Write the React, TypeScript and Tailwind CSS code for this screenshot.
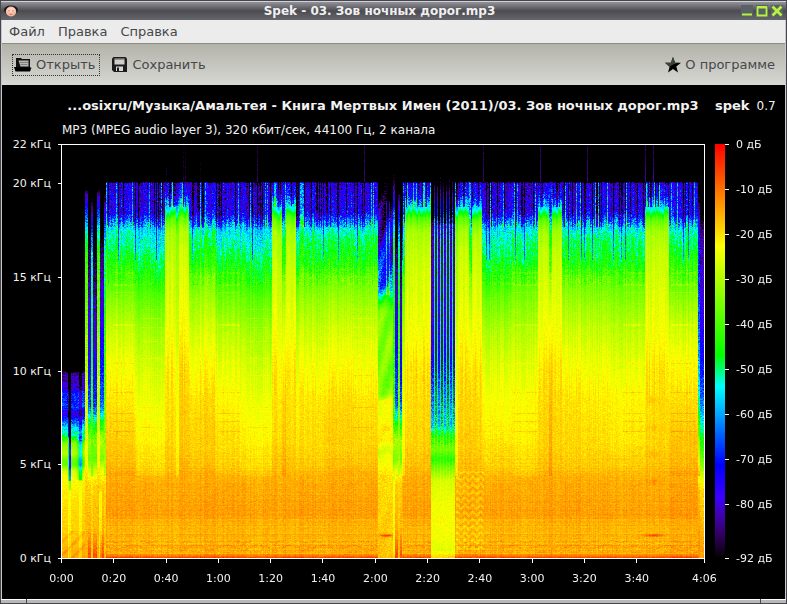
import { Fragment, useEffect, useRef } from "react";

/* ---------- spectrogram model ---------- */

const COLS = 642;
const ROWS = 413;

type Point = [number, number];

// Level curves: [row, dB]
const NORMAL: Point[] = [[0, -104], [36, -101], [38, -79], [66, -77], [74, -66], [84, -54], [95, -49], [118, -45], [132, -38], [155, -33], [185, -28], [215, -24.5], [255, -21], [300, -19.5], [318, -18], [340, -15], [370, -14], [385, -16], [408, -15.5], [410, -10], [412, -6]];
const QUIET: Point[] = [[0, -104], [36, -101], [38, -80], [68, -78], [76, -66], [84, -56], [100, -52], [112, -48], [130, -43], [155, -36], [185, -30], [215, -26], [250, -23], [290, -20.5], [318, -18.5], [340, -15], [370, -14], [385, -16], [408, -15.5], [410, -10], [412, -6]];
const LOUD: Point[] = [[0, -103], [36, -99], [38, -76], [50, -72], [58, -60], [66, -50], [74, -38], [86, -31], [110, -28], [150, -25.5], [190, -23], [225, -20], [300, -18.5], [340, -15], [370, -14], [385, -16], [408, -15.5], [410, -10], [412, -6]];
const INTRO: Point[] = [[0, -120], [222, -110], [228, -84], [243, -80], [248, -69], [262, -68], [268, -78], [274, -68], [281, -57], [290, -50], [298, -34], [308, -29], [314, -36], [319, -38], [325, -27], [335, -22], [360, -19.5], [390, -18], [412, -15]];
const TAIL: Point[] = [[0, -120], [50, -105], [90, -84], [190, -76], [250, -66], [285, -50], [320, -34], [335, -24], [345, -19], [412, -14]];
const BREAK: Point[] = [[0, -110], [40, -100], [80, -82], [115, -72], [140, -64], [150, -50], [165, -36], [195, -34], [235, -36], [248, -34], [256, -25], [295, -21], [307, -28], [315, -24], [330, -20], [412, -17]];
const GAP_DARK: Point[] = [[0, -120], [60, -110], [80, -84], [200, -76], [240, -66], [280, -58], [292, -44], [304, -36], [314, -44], [322, -37], [335, -27], [360, -24], [395, -24], [405, -26], [412, -18]];
const GAP_LIT: Point[] = [[0, -115], [40, -90], [70, -66], [95, -50], [200, -46], [280, -44], [300, -33], [314, -40], [322, -33], [335, -25], [380, -22], [405, -24], [412, -18]];
const LEAD_LIT: Point[] = [[0, -115], [36, -108], [50, -82], [85, -54], [110, -42], [200, -32], [260, -27], [320, -22], [340, -18], [412, -15]];
const LEAD_DARK: Point[] = [[0, -120], [36, -118], [110, -88], [200, -76], [260, -66], [275, -50], [295, -32], [314, -37], [325, -26], [340, -18.5], [385, -15.5], [412, -6]];

// Sections of the track: [last column, curve, offset in dB]
const SECTIONS: [number, Point[], number][] = [
  [6, INTRO, 0], [9, INTRO, -16], [17, INTRO, 0], [20, INTRO, -10], [23, INTRO, 2],
  [26, LEAD_LIT, 0], [29, LEAD_DARK, 0], [31, LEAD_LIT, -14], [35, LEAD_DARK, -2], [38, LEAD_LIT, 0], [42, LEAD_DARK, 2], [44, LEAD_LIT, -9],
  [74, QUIET, 2], [103, QUIET, -1], [114, LOUD, 0], [117, LOUD, -4], [127, LOUD, 1],
  [153, NORMAL, 1], [178, QUIET, 0], [210, QUIET, -1], [220, LOUD, 0], [224, NORMAL, 3], [234, LOUD, 0],
  [262, NORMAL, 0], [316, NORMAL, 1], [331, BREAK, 0], [333, GAP_LIT, 3], [336, LEAD_DARK, 2], [338, LEAD_LIT, -8], [340, LEAD_DARK, 0],
  [343, NORMAL, -3], [369, LOUD, 0], [393, GAP_DARK, 0],
  [396, LOUD, -4], [407, LOUD, 0], [410, NORMAL, 1], [420, LOUD, 0],
  [450, QUIET, 0], [476, NORMAL, -1], [487, LOUD, 0], [490, NORMAL, 4], [500, LOUD, 0],
  [583, NORMAL, 0], [607, LOUD, 0], [636, QUIET, 2], [638, TAIL, 12], [642, TAIL, 0],
];

function noise(a: number, b: number) {
  let h = Math.imul(a + 11, 374761393) ^ Math.imul(b + 7, 668265263);
  h = Math.imul(h ^ (h >>> 13), 1274126177);
  h ^= h >>> 16;
  return (h >>> 0) / 2147483648 - 1;
}

function curveAt(points: Point[], row: number) {
  for (let i = 1; i < points.length; i++) {
    if (row <= points[i][0]) {
      const [r0, d0] = points[i - 1];
      const [r1, d1] = points[i];
      return d0 + ((d1 - d0) * (row - r0)) / (r1 - r0);
    }
  }
  return points[points.length - 1][1];
}

const bump = (v: number, centre: number, width: number) => Math.exp(-(((v - centre) / width) ** 2));

function levelAt(x: number, y: number) {
  const section = SECTIONS.find((s) => x < s[0]) ?? SECTIONS[SECTIONS.length - 1];
  let curve = section[1];
  let offset = section[2];
  if (curve === GAP_DARK && (x - 370) % 3 === 2) curve = GAP_LIT;
  const full = curve === NORMAL || curve === QUIET || curve === LOUD;
  const n = noise(x >> 1, y) * 0.4 + noise(x, y) * 0.6;
  const col = noise(x, 9001);
  const col2 = noise(x >> 1, 5003);

  if (curve === INTRO) {
    if (x === 8 || x === 7) offset = y < 300 ? -50 : y < 345 ? -38 : -9;
    const edge = y > 290 && y < 335 ? bump(x, 18, 3) * -14 : 0;
    const swell = y > 385 ? bump((y + x) % 13, 6, 2) * 3 : 0;
    return curveAt(curve, y) + offset * (y > 335 ? 0.3 : 1) + edge + n * (y < 296 ? 7 : 2) + swell;
  }
  if (curve === BREAK) {
    const dx = x - 316;
    const wave = Math.sin(y / 9 + dx / 2.4) * (y > 150 ? 3 : 7);
    const spike = (dx === 8 || dx === 11) && y > 55 && y < 150 ? 16 : 0;
    const tone = y > 250 && y < 335 ? bump(y % 27, 13, 3) * bump(dx, 8, 5) * 4 : 0;
    const line = bump(y, 390, 1.3) * 13 * bump(dx, 8, 7);
    return curveAt(curve, y) + wave * (y < 255 ? 1 : 0.2) + spike + tone + line + n * (y < 150 ? 8 : 3);
  }

  let level = curveAt(curve, full && y > 40 && y < 130 ? y + col2 * 3 : y) + offset * (y > 330 ? 0.15 : 1);
  if (!full) {
    return level + n * (y < 300 ? 7 : 3) + (x > 36 && x < 40 && y > 345 ? -5 : 0);
  }

  // Band above 20 kHz is silent apart from single transients
  if (y < 37) {
    const transient = [195, 302, 421, 478, 525, 583, 591].includes(x) ? 15 : 0;
    const faint = [104, 121, 123, 138, 440, 507, 545].includes(x) ? 9 : 0;
    return level + transient + faint + n * 4;
  }

  const loud = curve === LOUD;
  const top = loud ? 62 : 82;
  if (y < top) {
    level += n * 11 + col * 7;
    if (col > 0.82) level += 11;
    if (col < -0.6) level -= 8;
  } else if (y < 140) {
    level += n * (loud ? 2 : 6) + col * (loud ? 1.5 : 4);
    if (col < -0.86 && y < 115 && !loud) level -= 10;
  } else {
    level += n * 2.4 + col * (y < 250 ? 2 : 1);
  }

  // Slow tonal drift between bars
  level += Math.sin(x / 19) * (y > 100 && y < 300 ? 0.8 : 0.2);

  // Held notes show as horizontal lines
  const held = (x > 50 && x < 72) || (x > 155 && x < 178) || (x > 350 && x < 380) || (x > 450 && x < 475) || (x > 560 && x < 583) || (x > 608 && x < 634);
  if (held && !loud && [127, 128, 139, 140, 147, 179, 180, 218, 247, 268, 276, 286].includes(y)) level += 3;
  const held2 = (x > 78 && x < 100) || (x > 184 && x < 207) || (x > 290 && x < 312);
  if (held2 && [164, 173, 182, 196, 213, 230, 262, 282].includes(y)) level += 2.5;
  if (y > 310) level += noise(3, y) * 0.6;
  if (y > 368) level += noise(4, y) * 1.1;
  if (y === 400) level += 3;
  if (y > 394 && y < 408) level += bump((y + Math.round(Math.sin(x / 5) * 2)) % 7, 3, 1) * 1.6 + n;

  // Trill after the second pause
  if (x >= 394 && x < 422 && y > 325 && y < 405) {
    level += Math.sin(y * 0.9 + Math.sin(x * 0.8) * 1.5) * 2 - 1.5;
  }
  // Low lead note near the end
  if (x > 578 && x < 605) {
    level += bump(y, 390, 1.3) * 9 * bump(x, 591, 9);
    if (y > 250 && y < 345) level += bump(y % 27, 12, 3) * bump(x, 591, 6) * 2;
  }
  return level;
}

function colourOf(db: number): [number, number, number] {
  const v = Math.min(1, Math.max(0, (db + 92) / 92)) * 0.6625;
  let r = 0;
  let g = 0;
  let b = 0;
  if (v < 0.15) {
    r = (0.15 - v) / 0.225;
    b = 1;
  } else if (v < 0.275) {
    g = (v - 0.15) / 0.125;
    b = 1;
  } else if (v < 0.325) {
    g = 1;
    b = (0.325 - v) / 0.05;
  } else if (v < 0.5) {
    r = (v - 0.325) / 0.175;
    g = 1;
  } else {
    r = 1;
    g = (0.6625 - v) / 0.1625;
  }
  const fade = v < 0.1 ? v / 0.1 : 1;
  return [r * 255 * fade, g * 255 * fade, b * 255 * fade];
}

function paint(canvas: HTMLCanvasElement, level: (x: number, y: number) => number) {
  const ctx = canvas.getContext("2d");
  if (!ctx) return;
  const image = ctx.createImageData(canvas.width, canvas.height);
  for (let y = 0; y < canvas.height; y++) {
    for (let x = 0; x < canvas.width; x++) {
      const [r, g, b] = colourOf(level(x, y));
      const i = (y * canvas.width + x) * 4;
      image.data[i] = r;
      image.data[i + 1] = g;
      image.data[i + 2] = b;
      image.data[i + 3] = 255;
    }
  }
  ctx.putImageData(image, 0, 0);
}

function Spectrogram() {
  const ref = useRef<HTMLCanvasElement>(null);
  useEffect(() => {
    if (ref.current) paint(ref.current, levelAt);
  }, []);
  return <canvas ref={ref} width={COLS} height={ROWS} className="block h-full w-full" />;
}

function Palette() {
  const ref = useRef<HTMLCanvasElement>(null);
  useEffect(() => {
    if (ref.current) paint(ref.current, (_, y) => -(y / 414) * 92);
  }, []);
  return <canvas ref={ref} width={10} height={415} className="block h-full w-[10px]" />;
}

/* ---------- axes ---------- */

const FREQUENCIES = [22.05, 20, 15, 10, 5, 0];
const TIMES = [0, 20, 40, 60, 80, 100, 120, 140, 160, 180, 200, 220, 246];
const LEVELS = [0, 10, 20, 30, 40, 50, 60, 70, 80, 92];

function Spacer({ size }: { size: number }) {
  return <div className="basis-0" style={{ flexGrow: size }} />;
}

function FrequencyAxis() {
  return (
    <div className="flex flex-col">
      {FREQUENCIES.map((f, i) => (
        <Fragment key={f}>
          {i > 0 && <Spacer size={FREQUENCIES[i - 1] - f} />}
          <div className="flex h-px items-center justify-end gap-[7px] leading-none">
            <span>{Math.floor(f)} кГц</span>
            <span className="h-px w-[3px] bg-white" />
          </div>
        </Fragment>
      ))}
    </div>
  );
}

function LevelAxis() {
  return (
    <div className="flex flex-1 flex-col">
      {LEVELS.map((v, i) => (
        <Fragment key={v}>
          {i > 0 && <Spacer size={v - LEVELS[i - 1]} />}
          <div className="flex h-px items-center gap-[7px] leading-none">
            <span className="h-px w-1 bg-white" />
            <span>{-v || 0} дБ</span>
          </div>
        </Fragment>
      ))}
    </div>
  );
}

function TimeAxis() {
  return (
    <div className="flex h-10">
      {TIMES.map((t, i) => (
        <Fragment key={t}>
          {i > 0 && <Spacer size={t - TIMES[i - 1]} />}
          <div className="flex w-px flex-col items-center gap-2">
            <span className="h-1 w-px bg-white" />
            <span className="leading-4 whitespace-nowrap">
              {Math.floor(t / 60)}:{String(t % 60).padStart(2, "0")}
            </span>
          </div>
        </Fragment>
      ))}
    </div>
  );
}

/* ---------- icons ---------- */

function FaceIcon() {
  return (
    <svg width="14" height="14" viewBox="0 0 14 14">
      <ellipse cx="7" cy="6" rx="7" ry="4.5" fill="#1c1414" />
      <ellipse cx="7" cy="7.5" rx="5.2" ry="5" fill="#f3b9a2" />
      <ellipse cx="7" cy="6" rx="4" ry="2.5" fill="#ffd4c2" />
      <path d="M5 6v1.5M9 6v1.5" stroke="#c0695c" />
      <path d="M5.5 10q1.5 1 3 0" stroke="#d2705f" fill="none" />
    </svg>
  );
}

function FolderIcon() {
  return (
    <svg width="18" height="15" viewBox="0 0 18 15">
      <path d="M2 13V1h5l1 1h8v10" fill="#111" />
      <path d="M4.500 3.500h10V9.500h-8z" fill="#b9b9b4" />
      <path d="M6 5.500h8M6.500 7.500h7" stroke="#808080" />
      <path d="M0 10h4l1 .500h12.500L16 14.500H1.500z" fill="#000" />
    </svg>
  );
}

function FloppyIcon() {
  return (
    <svg width="15" height="15" viewBox="0 0 15 15">
      <path d="M1.500 0h12l1.500 1.500V15H2l-2-2V1.500z" fill="#1c1c1c" />
      <path d="M2.500 1.500h10v6h-10z" fill="#cfcfca" />
      <path d="M2.500 2h10" stroke="#555" />
      <path d="M4 9.500h7V14H4z" fill="#d6d6d2" />
      <path d="M5 10.500h2V14H5z" fill="#1c1c1c" />
    </svg>
  );
}

function StarIcon() {
  return (
    <svg width="16" height="16" viewBox="0 0 16 16">
      <path d="M8 0l2.100 5.700H16l-4.700 3.700L13 15.500 8 12l-5 3.500 1.700-6.100L0 5.700h5.900z" fill="#000" />
      <path d="M8 0l2.100 5.700H14Q8 6.500 4.400 10L0 5.700h5.900z" fill="#3e423e" />
    </svg>
  );
}

const WINDOW_BUTTONS = [
  { label: "Свернуть", path: "M1 9.500h10", width: 2 },
  { label: "Развернуть", path: "M1.500 2.500h9v8h-9zM1 2h10", width: 1.8 },
  { label: "Закрыть", path: "M1.500 1.500l9 9M10.500 1.500l-9 9", width: 2.8 },
];

function TitleBar() {
  return (
    <header className="flex h-[19px] shrink-0 items-center border-t border-[#d0d0d6] bg-linear-to-b from-[#92929a] via-[#4c4c50] via-50% to-[#66666e] px-[3px]">
      <div className="flex w-7 items-center">
        <FaceIcon />
      </div>
      <h1 className="flex-1 text-center text-[12px] leading-4 font-bold text-[#f0f0f0]">Spek - 03. Зов ночных дорог.mp3</h1>
      <div className="flex w-14 justify-end gap-[3px]">
        {WINDOW_BUTTONS.map((b) => (
          <button key={b.label} aria-label={b.label} className="size-3 bg-[#5a6166]">
            <svg width="12" height="12" viewBox="0 0 12 12" fill="none">
              <path d={b.path} stroke="#b4f53c" strokeWidth={b.width} />
            </svg>
          </button>
        ))}
      </div>
    </header>
  );
}

export default function App() {
  return (
    <div className="flex h-screen flex-col border border-[#46444c] bg-black font-['DejaVu_Sans',sans-serif] text-[13px] text-[#45484a]">
      <TitleBar />
      <div className="flex min-h-0 flex-1 flex-col border-x border-[#c8c8c8]">
        <nav className="flex h-[23px] shrink-0 items-center gap-[13px] bg-[#ececec] px-[7px]">
          <button>Файл</button>
          <button>Правка</button>
          <button>Справка</button>
        </nav>
        <div className="flex h-[42px] shrink-0 items-center gap-3 border-t border-[#8c8c84] bg-linear-to-b from-[#b3b3aa] to-[#d8d8d4] px-[10px]">
          <button className="flex h-[22px] items-center gap-1 border border-dotted border-[#333] pr-[4px] pl-px">
            <FolderIcon />
            Открыть
          </button>
          <button className="flex items-center gap-[5px]">
            <FloppyIcon />
            Сохранить
          </button>
          <button className="ml-auto flex items-center gap-[4px]">
            <StarIcon />О программе
          </button>
        </div>
        <main className="grid min-h-0 flex-1 grid-cols-[59px_minmax(0,1fr)_80px] grid-rows-[auto_minmax(0,1fr)_auto] bg-black pt-[9px] text-[11px] text-[#f2f2f2]">
          <div className="col-start-2 pb-[2px] text-[12px] leading-6 whitespace-nowrap">
            <h2 className="text-center text-[13px] leading-6 font-bold">
              ...osixru/Музыка/Амальтея - Книга Мертвых Имен (2011)/03. Зов ночных дорог.mp3
            </h2>
            <p className="pl-px">MP3 (MPEG audio layer 3), 320 кбит/сек, 44100 Гц, 2 канала</p>
          </div>
          <p className="flex gap-[7px] pl-[10px] text-[12px] leading-6">
            <b className="text-[13px]">spek</b>
            <span>0.7</span>
          </p>
          <div className="col-start-1 row-start-2 grid">
            <FrequencyAxis />
          </div>
          <div className="border border-white">
            <Spectrogram />
          </div>
          <div className="flex pl-[10px]">
            <Palette />
            <LevelAxis />
          </div>
          <div className="col-start-2">
            <TimeAxis />
          </div>
        </main>
      </div>
      <footer className="flex h-1 shrink-0 gap-px bg-[#46444c]">
        <span className="w-[25px] border-t border-white bg-[#b8b8b8]" />
        <span className="flex-1 border-t border-white bg-[#b8b8b8]" />
        <span className="w-[25px] border-t border-white bg-[#b8b8b8]" />
      </footer>
    </div>
  );
}
